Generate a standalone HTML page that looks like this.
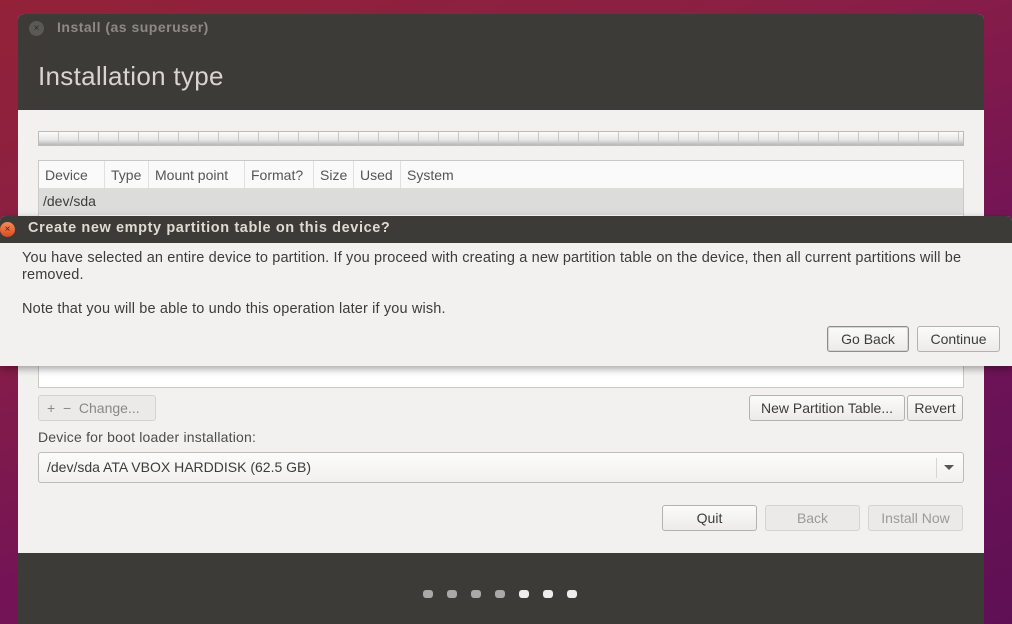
<!DOCTYPE html>
<html><head><meta charset="utf-8"><style>
*{margin:0;padding:0;box-sizing:border-box}
body{width:1012px;height:624px;overflow:hidden;position:relative;font-family:"Liberation Sans","DejaVu Sans",sans-serif;font-size:14px;color:#3c3c3c;
background:linear-gradient(160deg,#932238 0%,#8a1f45 30%,#741456 60%,#5f1055 100%)}
.win{position:absolute;left:18px;top:14px;width:966px;height:610px;background:#f2f1f0;border-radius:6px 6px 0 0;overflow:hidden}
.tb{position:absolute;left:0;top:0;width:100%;height:96px;background:#3c3b37}
.tb .x{position:absolute;left:11px;top:7px;width:15px;height:15px;border-radius:50%;background:#5a5955;color:#2c2b28;font-size:10px;text-align:center;line-height:15px}
.tb .t{position:absolute;left:39px;top:5px;color:#8d8a85;font-weight:bold;font-size:14px;letter-spacing:0.5px}
.tb h1{position:absolute;left:20px;top:47px;font-weight:normal;font-size:26px;letter-spacing:0.3px;color:#d8d4cf}
.bar{position:absolute;left:20px;top:117px;width:926px;height:15px;border:1px solid #bbb;
background-image:repeating-linear-gradient(90deg,transparent 0 19px,#c8c8c8 19px 20px),linear-gradient(#fbfbfb,#e6e6e6 60%,#b8b8b8)}
.tbl{position:absolute;left:20px;top:146px;width:926px;height:228px;border:1px solid #c9c9c9;background:#fff}
.hd{height:28px;background:#fafafa;display:flex;border-bottom:1px solid #ddd}
.hd div{border-right:1px solid #e0e0e0;padding:0 6px;line-height:28px;color:#555}
.row{height:26px;background:#dcdcda;line-height:24px;padding-left:4px;color:#3c3c3c}
.btn{position:absolute;height:26px;border:1px solid #b4b2ad;border-radius:3px;background:linear-gradient(#fbfbfa,#ecebe9);text-align:center;line-height:24px;color:#3c3c3c}
.dis{color:#9a9a9a;background:#ebeae8;border-color:#d4d3d0}
.lbl{position:absolute;left:20px;top:415px;color:#4c4c4c;letter-spacing:0.2px}
.combo{position:absolute;left:20px;top:438px;width:926px;height:31px;border:1px solid #bdbcb8;border-radius:3px;background:linear-gradient(#fcfcfc,#f1f0ee);line-height:29px;padding-left:8px;color:#3c3c3c}
.combo .sep{position:absolute;right:26px;top:5px;width:1px;height:20px;background:#d5d5d5}
.combo .ar{position:absolute;right:9px;top:12px;border-left:5px solid transparent;border-right:5px solid transparent;border-top:5px solid #555}
.foot{position:absolute;left:0;top:539px;width:100%;height:71px;background:#3c3b37}
.dot{position:absolute;top:576px;width:10px;height:8px;border-radius:3px}
.dlg{position:absolute;left:0;top:216px;width:1012px;height:150px;background:#f2f1f0;box-shadow:0 3px 8px rgba(0,0,0,.35);border-radius:5px 5px 0 0}
.dlg .dt{height:27px;background:#3c3b37;border-radius:5px 5px 0 0;position:relative}
.dlg .dx{position:absolute;left:0;top:6px;width:15px;height:15px;border-radius:50%;background:linear-gradient(#f58a5a,#df4a1e);color:#5a1f0a;font-size:10px;text-align:center;line-height:15px}
.dlg .dtt{position:absolute;left:28px;top:4px;color:#dfdbd2;font-weight:bold;font-size:14.5px;letter-spacing:0.6px}
.dlg p{position:absolute;left:22px;color:#3c3c3c;font-size:14.5px;line-height:17px;letter-spacing:0.15px}
</style></head><body>
<div class="win">
 <div class="tb"><div class="x">×</div><div class="t">Install (as superuser)</div><h1>Installation type</h1></div>
 <div class="bar"></div>
 <div class="tbl">
  <div class="hd"><div style="width:66px">Device</div><div style="width:44px">Type</div><div style="width:96px">Mount point</div><div style="width:69px">Format?</div><div style="width:40px">Size</div><div style="width:47px">Used</div><div style="border:none">System</div></div>
  <div class="row">/dev/sda</div>
 </div>
 <div class="btn dis" style="left:20px;top:381px;width:118px;text-align:left;padding-left:8px;color:#888">+ &nbsp;− &nbsp;Change...</div>
 <div class="btn" style="left:731px;top:381px;width:156px">New Partition Table...</div>
 <div class="btn" style="left:889px;top:381px;width:56px">Revert</div>
 <div class="lbl">Device for boot loader installation:</div>
 <div class="combo">/dev/sda ATA VBOX HARDDISK (62.5 GB)<div class="sep"></div><div class="ar"></div></div>
 <div class="btn" style="left:644px;top:491px;width:95px">Quit</div>
 <div class="btn dis" style="left:747px;top:491px;width:95px">Back</div>
 <div class="btn dis" style="left:850px;top:491px;width:95px">Install Now</div>
 <div class="foot"></div>
 <div class="dot" style="left:405px;background:#a9a9a7"></div>
 <div class="dot" style="left:429px;background:#a9a9a7"></div>
 <div class="dot" style="left:453px;background:#a9a9a7"></div>
 <div class="dot" style="left:477px;background:#a9a9a7"></div>
 <div class="dot" style="left:501px;background:#eeeeec"></div>
 <div class="dot" style="left:525px;background:#eeeeec"></div>
 <div class="dot" style="left:549px;background:#eeeeec"></div>
</div>
<div class="dlg">
 <div class="dt"><div class="dx">×</div><div class="dtt">Create new empty partition table on this device?</div></div>
 <p style="top:34px;width:965px">You have selected an entire device to partition. If you proceed with creating a new partition table on the device, then all current partitions will be<br>removed.</p>
 <p style="top:85px">Note that you will be able to undo this operation later if you wish.</p>
 <div class="btn" style="left:827px;top:110px;width:82px;border-color:#8f8d88;box-shadow:inset 0 0 0 1px #d8d6d2">Go Back</div>
 <div class="btn" style="left:917px;top:110px;width:83px">Continue</div>
</div>
</body></html>
